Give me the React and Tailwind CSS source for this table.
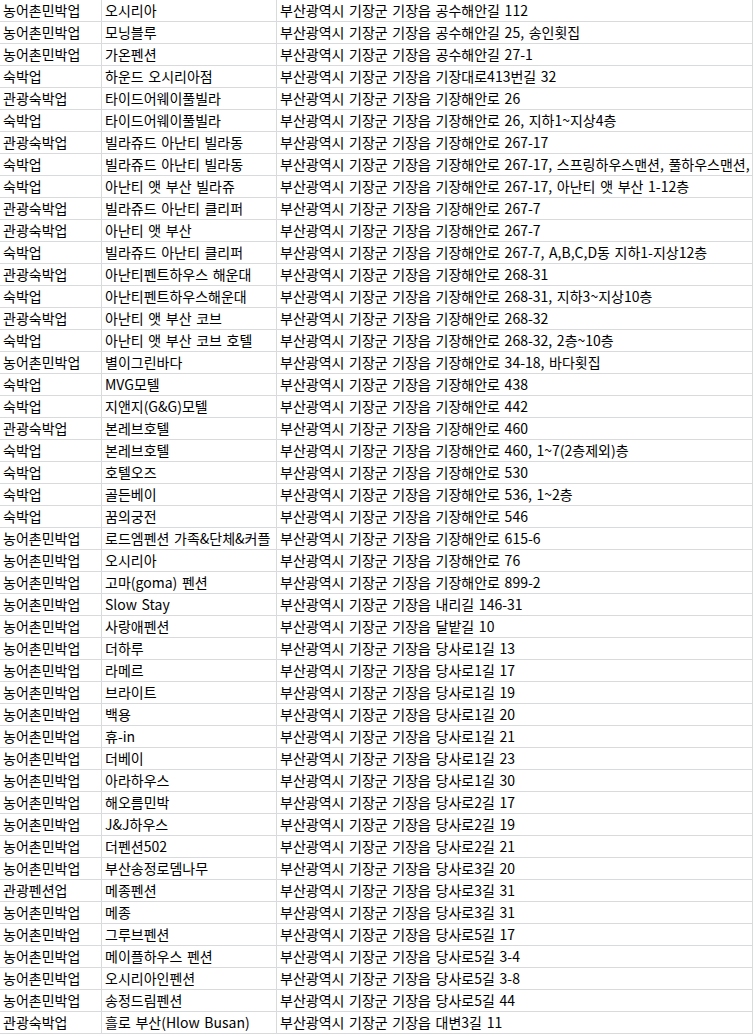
import React from "react";

const P = "부산광역시 기장군 기장읍 ";
const rows = [
  ["농어촌민박업", "오시리아", "공수해안길 112"],
  ["농어촌민박업", "모닝블루", "공수해안길 25, 송인횟집"],
  ["농어촌민박업", "가온펜션", "공수해안길 27-1"],
  ["숙박업", "하운드 오시리아점", "기장대로413번길 32"],
  ["관광숙박업", "타이드어웨이풀빌라", "기장해안로 26"],
  ["숙박업", "타이드어웨이풀빌라", "기장해안로 26, 지하1~지상4층"],
  ["관광숙박업", "빌라쥬드 아난티 빌라동", "기장해안로 267-17"],
  ["숙박업", "빌라쥬드 아난티 빌라동", "기장해안로 267-17, 스프링하우스맨션, 풀하우스맨션,"],
  ["숙박업", "아난티 앳 부산 빌라쥬", "기장해안로 267-17, 아난티 앳 부산 1-12층"],
  ["관광숙박업", "빌라쥬드 아난티 클리퍼", "기장해안로 267-7"],
  ["관광숙박업", "아난티 앳 부산", "기장해안로 267-7"],
  ["숙박업", "빌라쥬드 아난티 클리퍼", "기장해안로 267-7, A,B,C,D동 지하1-지상12층"],
  ["관광숙박업", "아난티펜트하우스 해운대", "기장해안로 268-31"],
  ["숙박업", "아난티펜트하우스해운대", "기장해안로 268-31, 지하3~지상10층"],
  ["관광숙박업", "아난티 앳 부산 코브", "기장해안로 268-32"],
  ["숙박업", "아난티 앳 부산 코브 호텔", "기장해안로 268-32, 2층~10층"],
  ["농어촌민박업", "별이그린바다", "기장해안로 34-18, 바다횟집"],
  ["숙박업", "MVG모텔", "기장해안로 438"],
  ["숙박업", "지앤지(G&G)모텔", "기장해안로 442"],
  ["관광숙박업", "본레브호텔", "기장해안로 460"],
  ["숙박업", "본레브호텔", "기장해안로 460, 1~7(2층제외)층"],
  ["숙박업", "호텔오즈", "기장해안로 530"],
  ["숙박업", "골든베이", "기장해안로 536, 1~2층"],
  ["숙박업", "꿈의궁전", "기장해안로 546"],
  ["농어촌민박업", "로드엠펜션 가족&단체&커플", "기장해안로 615-6"],
  ["농어촌민박업", "오시리아", "기장해안로 76"],
  ["농어촌민박업", "고마(goma) 펜션", "기장해안로 899-2"],
  ["농어촌민박업", "Slow Stay", "내리길 146-31"],
  ["농어촌민박업", "사랑애펜션", "달밭길 10"],
  ["농어촌민박업", "더하루", "당사로1길 13"],
  ["농어촌민박업", "라메르", "당사로1길 17"],
  ["농어촌민박업", "브라이트", "당사로1길 19"],
  ["농어촌민박업", "백용", "당사로1길 20"],
  ["농어촌민박업", "휴-in", "당사로1길 21"],
  ["농어촌민박업", "더베이", "당사로1길 23"],
  ["농어촌민박업", "아라하우스", "당사로1길 30"],
  ["농어촌민박업", "해오름민박", "당사로2길 17"],
  ["농어촌민박업", "J&J하우스", "당사로2길 19"],
  ["농어촌민박업", "더펜션502", "당사로2길 21"],
  ["농어촌민박업", "부산송정로뎀나무", "당사로3길 20"],
  ["관광펜션업", "메종펜션", "당사로3길 31"],
  ["농어촌민박업", "메종", "당사로3길 31"],
  ["농어촌민박업", "그루브펜션", "당사로5길 17"],
  ["농어촌민박업", "메이플하우스 펜션", "당사로5길 3-4"],
  ["농어촌민박업", "오시리아인펜션", "당사로5길 3-8"],
  ["농어촌민박업", "송정드림펜션", "당사로5길 44"],
  ["관광숙박업", "흘로 부산(Hlow Busan)", "대변3길 11"],
];

const cell =
  "h-[22px] border-b border-r border-[#d9dadc] flex items-center overflow-hidden whitespace-nowrap pl-[3px] leading-[21px] [word-spacing:1.5px]";

export default function App() {
  return (
    <div
      className="bg-white text-black text-[14px] w-[754px]"
      style={{ fontFamily: '"Noto Sans CJK KR", "Noto Sans", sans-serif' }}
    >
      <div className="grid grid-cols-[102px_175px_476px]">
        {rows.map((r, i) => (
          <React.Fragment key={i}>
            <div className={cell}>{r[0]}</div>
            <div className={cell}>{r[1]}</div>
            <div className={cell}>{P + r[2]}</div>
          </React.Fragment>
        ))}
      </div>
    </div>
  );
}
